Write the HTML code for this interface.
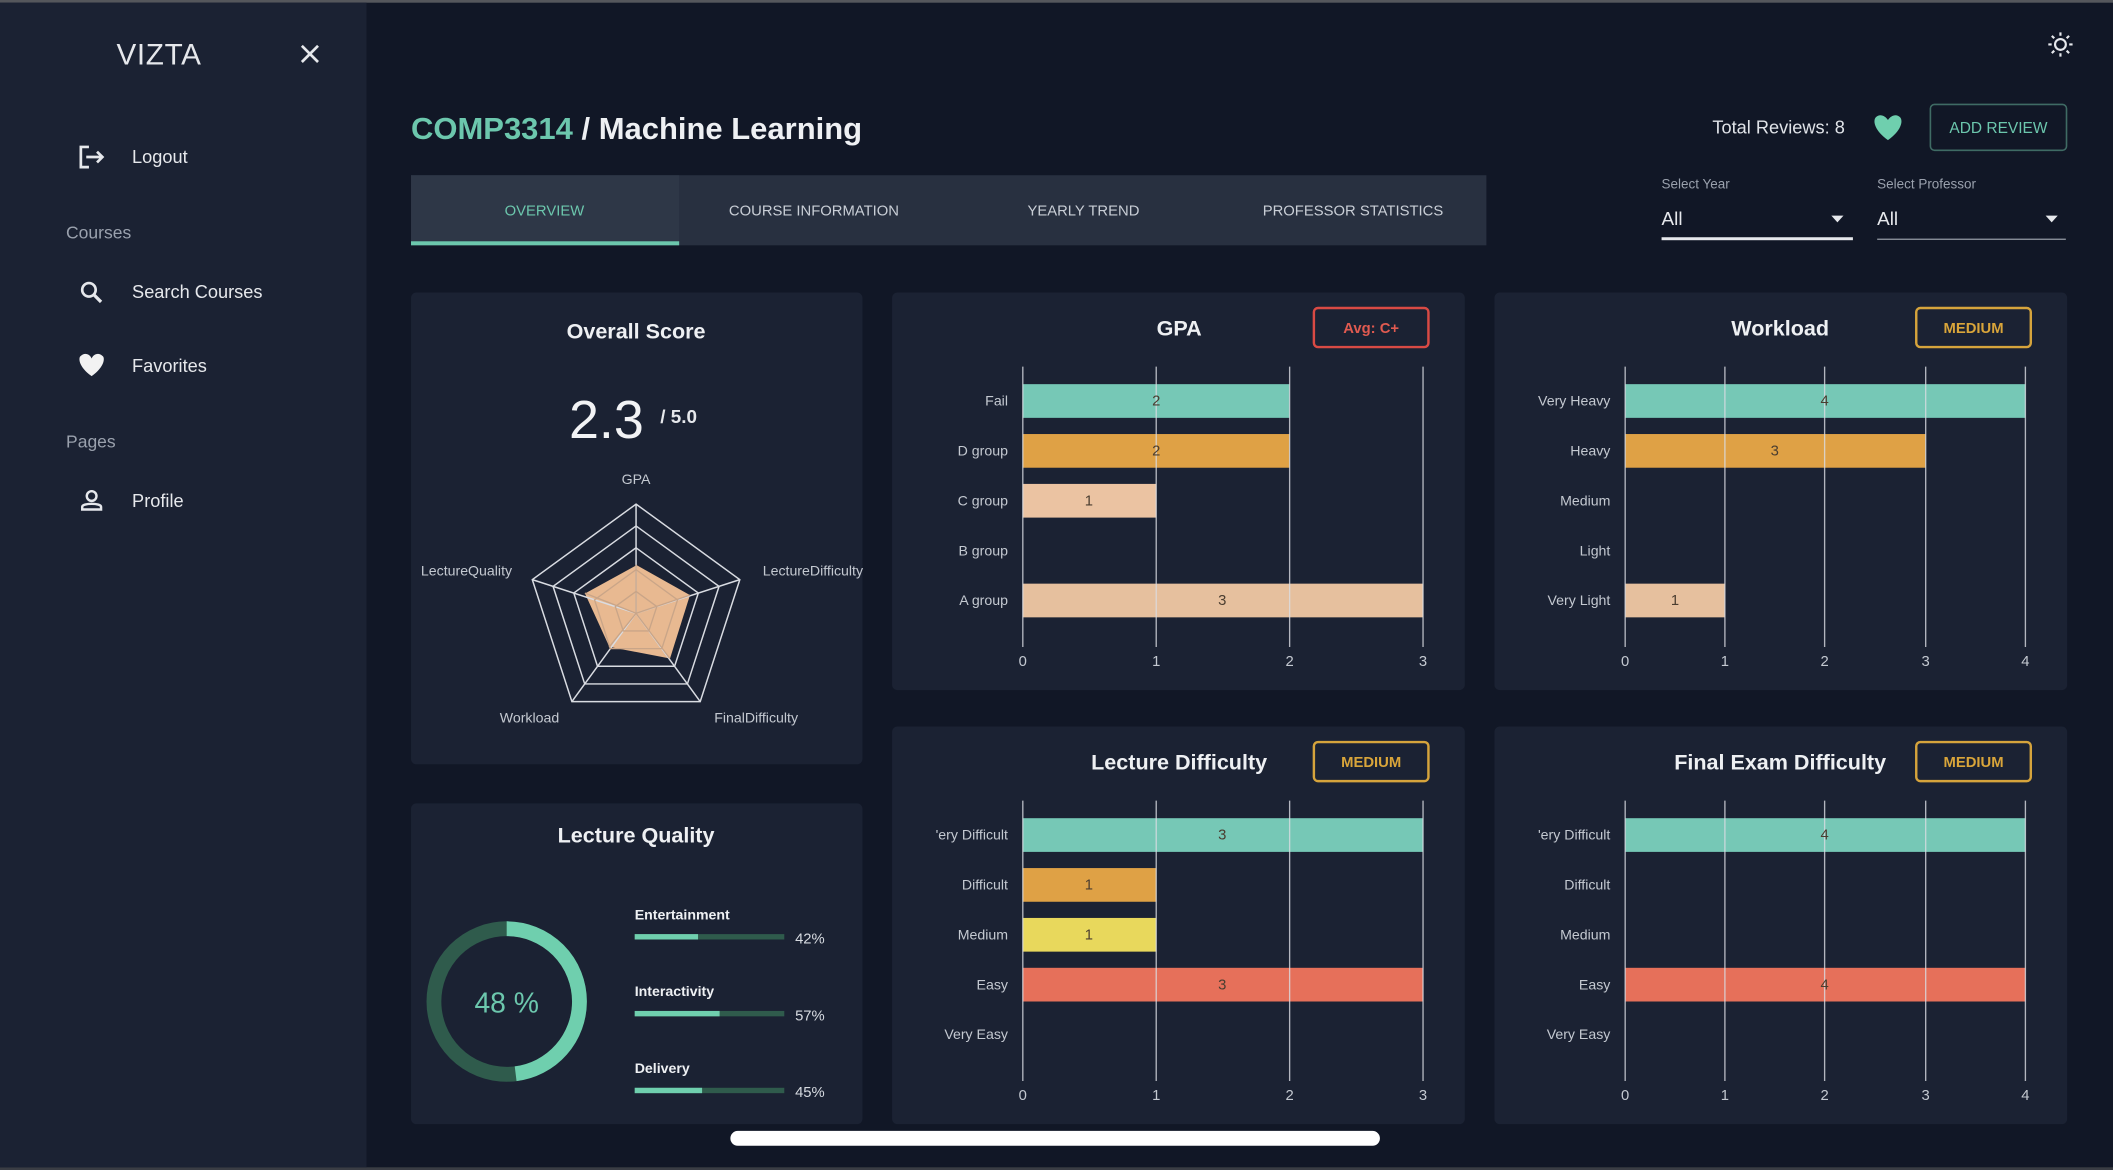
<!DOCTYPE html>
<html><head><meta charset="utf-8"><style>
html,body{margin:0;padding:0;background:#111726;overflow:hidden}
svg{display:block}
text{font-family:"Liberation Sans",sans-serif}
</style></head><body>
<svg width="2113" height="1170" viewBox="0 0 1568 868" preserveAspectRatio="none" xmlns="http://www.w3.org/2000/svg">
<rect width="1568" height="868" fill="#111726"/>
<rect width="1568" height="2" fill="#55575c"/>
<rect y="866" width="1568" height="2" fill="#3a3d44"/>
<rect x="0" y="2" width="272" height="864" fill="#1b2233"/>
<text x="118" y="48" font-size="22" fill="#e6e8ec" text-anchor="middle" letter-spacing="0.5">VIZTA</text>
<path d="M224 34 L236 46 M236 34 L224 46" stroke="#e6e8ec" stroke-width="2"/>
<path d="M66 109 H60 V124 H66" fill="none" stroke="#e6e8ec" stroke-width="2"/>
<path d="M64 116.5 H76 M72 112.5 L76 116.5 L72 120.5" fill="none" stroke="#e6e8ec" stroke-width="2"/>
<text x="98" y="121" font-size="13.5" fill="#e6e8ec">Logout</text>
<text x="49" y="177" font-size="13" fill="#9aa1ad">Courses</text>
<circle cx="66" cy="215" r="5" fill="none" stroke="#e6e8ec" stroke-width="2"/>
<path d="M69.5 218.5 L75 224" stroke="#e6e8ec" stroke-width="2.4"/>
<text x="98" y="221" font-size="13.5" fill="#e6e8ec">Search Courses</text>
<path d="M68 279 C58 272 58 265 60 264 C63 261 67 263 68 266 C69 263 73 261 76 264 C78 265 78 272 68 279Z" fill="#f2f2f2"/>
<text x="98" y="276" font-size="13.5" fill="#e6e8ec">Favorites</text>
<text x="49" y="332" font-size="13" fill="#9aa1ad">Pages</text>
<circle cx="68" cy="368" r="3.6" fill="none" stroke="#e6e8ec" stroke-width="1.8"/>
<path d="M61 378 V376 C61 373 75 373 75 376 V378 Z" fill="none" stroke="#e6e8ec" stroke-width="1.8"/>
<text x="98" y="376" font-size="13.5" fill="#e6e8ec">Profile</text>
<circle cx="1529" cy="33" r="4" fill="none" stroke="#e6e8ec" stroke-width="1.6"/>
<g stroke="#e6e8ec" stroke-width="1.6">
<path d="M1529 24v2.5M1529 39.5v2.5M1520 33h2.5M1535.5 33h2.5M1522.6 26.6l1.8 1.8M1533.6 37.6l1.8 1.8M1522.6 39.4l1.8-1.8M1533.6 28.4l1.8-1.8"/>
</g>
<text x="305" y="103" font-size="23" font-weight="bold"><tspan fill="#6cc7ad">COMP3314</tspan><tspan fill="#eef0f3"> / Machine Learning</tspan></text>
<rect x="305" y="130" width="798" height="52" fill="#283040"/>
<rect x="305" y="130" width="199" height="50" fill="#2e3747"/>
<rect x="305" y="179" width="199" height="3" fill="#6cc7ad"/>
<g font-size="11" text-anchor="middle" fill="#c9ced6">
<text x="404" y="160" fill="#6cc7ad">OVERVIEW</text>
<text x="604" y="160">COURSE INFORMATION</text>
<text x="804" y="160">YEARLY TREND</text>
<text x="1004" y="160">PROFESSOR STATISTICS</text>
</g>
<text x="1369" y="99" font-size="13.5" fill="#e0e3e8" text-anchor="end">Total Reviews: 8</text>
<path d="M1401 104 C1390 96 1390 89 1392 87 C1395 84 1399 86 1401 89 C1403 86 1407 84 1410 87 C1412 89 1412 96 1401 104Z" fill="#6fcfae"/>
<rect x="1432.5" y="77.5" width="101" height="34" rx="3" fill="none" stroke="#3f6b64" stroke-width="1.2"/>
<text x="1483" y="98.5" font-size="11.5" fill="#6cc7ad" text-anchor="middle">ADD REVIEW</text>
<text x="1233" y="140" font-size="10" fill="#9aa1ad">Select Year</text>
<text x="1233" y="167" font-size="14" fill="#e6e8ec">All</text>
<path d="M1359 160 h9 l-4.5 5z" fill="#e6e8ec"/>
<rect x="1233" y="176" width="142" height="2.2" fill="#e6e8ec"/>
<text x="1393" y="140" font-size="10" fill="#9aa1ad">Select Professor</text>
<text x="1393" y="167" font-size="14" fill="#e6e8ec">All</text>
<path d="M1518 160 h9 l-4.5 5z" fill="#e6e8ec"/>
<rect x="1393" y="177" width="140" height="1" fill="#8d939c"/>
<g fill="#1b2233">
<rect x="305" y="217" width="335" height="350" rx="4"/>
<rect x="305" y="596" width="335" height="238" rx="4"/>
<rect x="662" y="217" width="425" height="295" rx="4"/>
<rect x="1109" y="217" width="425" height="295" rx="4"/>
<rect x="662" y="539" width="425" height="295" rx="4"/>
<rect x="1109" y="539" width="425" height="295" rx="4"/>
</g>
<text x="472" y="251" font-size="16" font-weight="bold" fill="#eef0f3" text-anchor="middle">Overall Score</text>
<text x="450" y="325" font-size="40" fill="#f2f3f5" text-anchor="middle">2.3</text>
<text x="490" y="314" font-size="14" font-weight="bold" fill="#e6e8ec">/ 5.0</text>
<g font-size="10.5" fill="#c4c9d1">
<text x="472" y="359" text-anchor="middle">GPA</text>
<text x="566" y="427">LectureDifficulty</text>
<text x="530" y="536">FinalDifficulty</text>
<text x="415" y="536" text-anchor="end">Workload</text>
<text x="380" y="427" text-anchor="end">LectureQuality</text>
</g>
<polygon points="472.4,419.3 512,441.5 497.2,488.5 452.2,479.9 434.1,440.3" fill="#e8b991"/>
<g fill="none" stroke="#d9dce2" stroke-width="1.1">
<polygon points="472,374 549,430 519.6,520.5 424.4,520.5 395,430"/>
<polygon points="472,390.2 533.6,435 510.1,507.4 433.9,507.4 410.4,435"/>
<polygon points="472,406.4 518.2,440 500.6,494.3 443.4,494.3 425.8,440"/>
<path d="M472 455 L472 374 M472 455 L549 430 M472 455 L519.6 520.5 M472 455 L424.4 520.5 M472 455 L395 430"/>
</g>
<g fill="none" stroke="#c9a588" stroke-width="1">
<polygon points="472,422.6 502.8,445 491.1,481.2 452.9,481.2 441.2,445"/>
<polygon points="472,438.8 487.4,450 481.5,468.1 462.5,468.1 456.6,450"/>
<path d="M472 455 L472 419 M472 455 L512 441.5 M472 455 L497 488.5 M472 455 L452 480 M472 455 L434 440"/>
</g>
<text x="472" y="625" font-size="16" font-weight="bold" fill="#eef0f3" text-anchor="middle">Lecture Quality</text>
<circle cx="376" cy="743" r="54" fill="none" stroke="#2f5b4c" stroke-width="11"/>
<circle cx="376" cy="743" r="54" fill="none" stroke="#6fcfae" stroke-width="11" stroke-dasharray="162.9 400" transform="rotate(-90 376 743)"/>
<text x="376" y="751" font-size="21" fill="#6cc7ad" text-anchor="middle">48 %</text>
<g font-size="10.5" font-weight="bold" fill="#eef0f3">
<text x="471" y="682">Entertainment</text>
<text x="471" y="739">Interactivity</text>
<text x="471" y="796">Delivery</text>
</g>
<rect x="471" y="693" width="111" height="4" fill="#2f5b4c"/><rect x="471" y="693" width="47" height="4" fill="#6fcfae"/>
<rect x="471" y="750" width="111" height="4" fill="#2f5b4c"/><rect x="471" y="750" width="63" height="4" fill="#6fcfae"/>
<rect x="471" y="807" width="111" height="4" fill="#2f5b4c"/><rect x="471" y="807" width="50" height="4" fill="#6fcfae"/>
<g font-size="11" fill="#d6dae0">
<text x="590" y="700">42%</text><text x="590" y="757">57%</text><text x="590" y="814">45%</text>
</g>
<text x="875" y="249" font-size="16" font-weight="bold" fill="#eef0f3" text-anchor="middle">GPA</text>
<rect x="975" y="228.5" width="85" height="29" rx="3" fill="none" stroke="#d94a44" stroke-width="1.8"/>
<text x="1017.5" y="247" font-size="11" font-weight="bold" fill="#e05a50" text-anchor="middle">Avg: C+</text>
<rect x="759" y="285" width="198" height="25" fill="#76c8b6"/>
<rect x="759" y="322" width="198" height="25" fill="#dfa145"/>
<rect x="759" y="359" width="99" height="25" fill="#ebc3a2"/>
<rect x="759" y="433" width="297" height="25" fill="#e6c09e"/>
<g stroke="#d9dce2" stroke-width="1" stroke-opacity="0.8"><path d="M759 272V480M858 272V480M957 272V480M1056 272V480"/></g>
<g font-size="11" fill="#4a3d30" text-anchor="middle">
<text x="858" y="301">2</text><text x="858" y="338">2</text><text x="808" y="375">1</text><text x="907" y="449">3</text>
</g>
<g font-size="10.5" fill="#c4c9d1" text-anchor="end">
<text x="748" y="301">Fail</text><text x="748" y="338">D group</text><text x="748" y="375">C group</text><text x="748" y="412">B group</text><text x="748" y="449">A group</text>
</g>
<g font-size="11" fill="#c4c9d1" text-anchor="middle">
<text x="759" y="494">0</text><text x="858" y="494">1</text><text x="957" y="494">2</text><text x="1056" y="494">3</text>
</g>
<text x="1321" y="249" font-size="16" font-weight="bold" fill="#eef0f3" text-anchor="middle">Workload</text>
<rect x="1422" y="228.5" width="85" height="29" rx="3" fill="none" stroke="#d6a43c" stroke-width="1.8"/>
<text x="1464.5" y="247" font-size="11" font-weight="bold" fill="#d9a53a" text-anchor="middle">MEDIUM</text>
<rect x="1206" y="285" width="297" height="25" fill="#76c8b6"/>
<rect x="1206" y="322" width="223" height="25" fill="#dfa145"/>
<rect x="1206" y="433" width="74" height="25" fill="#e6c09e"/>
<g stroke="#d9dce2" stroke-width="1" stroke-opacity="0.8"><path d="M1206 272V480M1280 272V480M1354 272V480M1429 272V480M1503 272V480"/></g>
<g font-size="11" fill="#4a3d30" text-anchor="middle">
<text x="1354" y="301">4</text><text x="1317" y="338">3</text><text x="1243" y="449">1</text>
</g>
<g font-size="10.5" fill="#c4c9d1" text-anchor="end">
<text x="1195" y="301">Very Heavy</text><text x="1195" y="338">Heavy</text><text x="1195" y="375">Medium</text><text x="1195" y="412">Light</text><text x="1195" y="449">Very Light</text>
</g>
<g font-size="11" fill="#c4c9d1" text-anchor="middle">
<text x="1206" y="494">0</text><text x="1280" y="494">1</text><text x="1354" y="494">2</text><text x="1429" y="494">3</text><text x="1503" y="494">4</text>
</g>
<text x="875" y="571" font-size="16" font-weight="bold" fill="#eef0f3" text-anchor="middle">Lecture Difficulty</text>
<rect x="975" y="550.5" width="85" height="29" rx="3" fill="none" stroke="#d6a43c" stroke-width="1.8"/>
<text x="1017.5" y="569" font-size="11" font-weight="bold" fill="#d9a53a" text-anchor="middle">MEDIUM</text>
<rect x="759" y="607" width="297" height="25" fill="#76c8b6"/>
<rect x="759" y="644" width="99" height="25" fill="#dfa145"/>
<rect x="759" y="681" width="99" height="25" fill="#e8d85c"/>
<rect x="759" y="718" width="297" height="25" fill="#e6705a"/>
<g stroke="#d9dce2" stroke-width="1" stroke-opacity="0.8"><path d="M759 594V802M858 594V802M957 594V802M1056 594V802"/></g>
<g font-size="11" fill="#4a3d30" text-anchor="middle">
<text x="907" y="623">3</text><text x="808" y="660">1</text><text x="808" y="697">1</text><text x="907" y="734">3</text>
</g>
<g font-size="10.5" fill="#c4c9d1" text-anchor="end">
<text x="748" y="623">'ery Difficult</text><text x="748" y="660">Difficult</text><text x="748" y="697">Medium</text><text x="748" y="734">Easy</text><text x="748" y="771">Very Easy</text>
</g>
<g font-size="11" fill="#c4c9d1" text-anchor="middle">
<text x="759" y="816">0</text><text x="858" y="816">1</text><text x="957" y="816">2</text><text x="1056" y="816">3</text>
</g>
<text x="1321" y="571" font-size="16" font-weight="bold" fill="#eef0f3" text-anchor="middle">Final Exam Difficulty</text>
<rect x="1422" y="550.5" width="85" height="29" rx="3" fill="none" stroke="#d6a43c" stroke-width="1.8"/>
<text x="1464.5" y="569" font-size="11" font-weight="bold" fill="#d9a53a" text-anchor="middle">MEDIUM</text>
<rect x="1206" y="607" width="297" height="25" fill="#76c8b6"/>
<rect x="1206" y="718" width="297" height="25" fill="#e6705a"/>
<g stroke="#d9dce2" stroke-width="1" stroke-opacity="0.8"><path d="M1206 594V802M1280 594V802M1354 594V802M1429 594V802M1503 594V802"/></g>
<g font-size="11" fill="#4a3d30" text-anchor="middle">
<text x="1354" y="623">4</text><text x="1354" y="734">4</text>
</g>
<g font-size="10.5" fill="#c4c9d1" text-anchor="end">
<text x="1195" y="623">'ery Difficult</text><text x="1195" y="660">Difficult</text><text x="1195" y="697">Medium</text><text x="1195" y="734">Easy</text><text x="1195" y="771">Very Easy</text>
</g>
<g font-size="11" fill="#c4c9d1" text-anchor="middle">
<text x="1206" y="816">0</text><text x="1280" y="816">1</text><text x="1354" y="816">2</text><text x="1429" y="816">3</text><text x="1503" y="816">4</text>
</g>
<rect x="542" y="839" width="482" height="11" rx="5.5" fill="#ffffff"/>
</svg>
</body></html>
